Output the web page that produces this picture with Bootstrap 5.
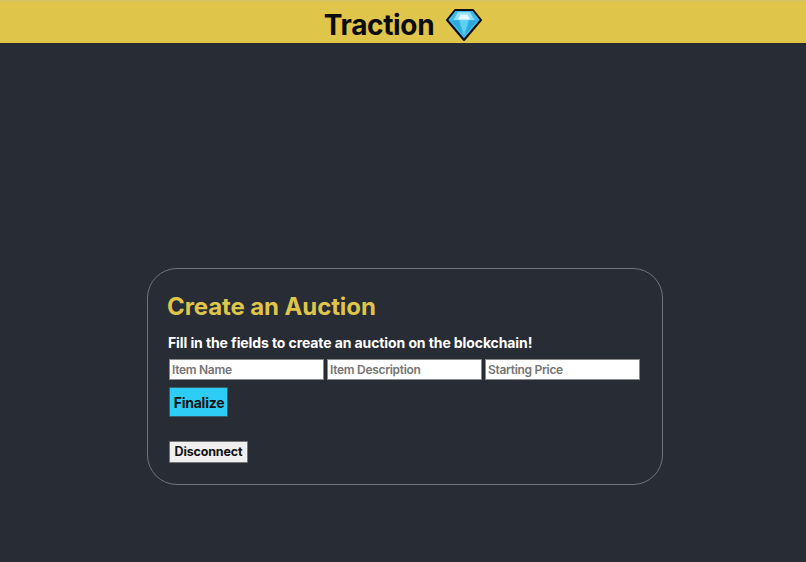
<!doctype html>
<html lang="en">
<head>
<meta charset="utf-8">
<title>Traction</title>
<link rel="stylesheet" href="https://cdn.jsdelivr.net/npm/bootstrap@5.3.0/dist/css/bootstrap.min.css">
<style>
html,body{height:100%}
body{background:#282c34;font-family:Inter,"Liberation Sans",sans-serif;overflow:hidden}
.top-strip{height:43px;background:#dfc549;border-top:2px solid #d6c45e;color:#0b0b0b;padding-top:4px}
.brand-name{font-size:28px;font-weight:700;line-height:1;letter-spacing:-.35px;margin-right:4px}
.auction-panel{width:516px;height:217px;margin:225px 0 0 147px;padding:23px 20px 0;border:1px solid #70747b;border-radius:30px}
.auction-title{font-size:24px;font-weight:700;line-height:30px;color:#dfc549;margin:0 0 12px -1px;letter-spacing:-.1px}
.auction-sub{font-size:14px;font-weight:700;line-height:18px;color:#fff;margin:0 0 7px;letter-spacing:-.1px}
.field-row{gap:3px;padding-left:1px}
.field{width:155px;height:21px;padding:0 2px;border:1px solid #8a8a8a;border-radius:0;background:#fff;font:600 12px/19px Inter,"Liberation Sans",sans-serif;letter-spacing:-.3px;outline:0}
.field::placeholder{color:#757575;opacity:1}
.act{display:block;border-radius:1px;font-weight:700;color:#111;line-height:1}
.act-finalize{width:59px;height:30px;margin:7px 0 0 1px;padding:2px 0 0 1px;background:#2dcdf5;border:1px solid #38606e;font-size:14px;letter-spacing:-.25px}
.act-disconnect{width:79px;height:22px;margin:24px 0 0 1px;padding:1px 0 0;background:#efefef;border:1px solid #767676;font-size:12.5px;letter-spacing:-.15px}
</style>
</head>
<body>
<header class="top-strip d-flex justify-content-center align-items-center gap-2">
  <span class="brand-name">Traction</span>
  <svg width="36" height="34" viewBox="0 0 36 34" aria-hidden="true">
    <path d="M9 2H27L35 12L18 32L1 12Z" fill="#3dbcec" stroke="#0c0c0c" stroke-width="2" stroke-linejoin="round"/>
    <path d="M12 4H24L28.500 12H7.500Z" fill="#8fe0f8"/>
    <path d="M13.500 12H22.500L18 27Z" fill="#5fd0f4"/>
    <path d="M14.500 6.500H21.500L24 11.500H12Z" fill="#e6f9ff"/>
    <path d="M5 12.500H12.500L16.500 26Z" fill="#2ea8dc"/>
    <path d="M31 12.500H23.500L19.500 26Z" fill="#2ea8dc"/>
  </svg>
</header>
<main>
  <section class="auction-panel">
    <h1 class="auction-title">Create an Auction</h1>
    <p class="auction-sub">Fill in the fields to create an auction on the blockchain!</p>
    <form>
      <div class="field-row d-flex">
        <input class="field" type="text" placeholder="Item Name">
        <input class="field" type="text" placeholder="Item Description">
        <input class="field" type="text" placeholder="Starting Price">
      </div>
      <button class="act act-finalize" type="button">Finalize</button>
      <button class="act act-disconnect" type="button">Disconnect</button>
    </form>
  </section>
</main>
<script src="https://cdn.jsdelivr.net/npm/bootstrap@5.3.0/dist/js/bootstrap.bundle.min.js"></script>
</body>
</html>
